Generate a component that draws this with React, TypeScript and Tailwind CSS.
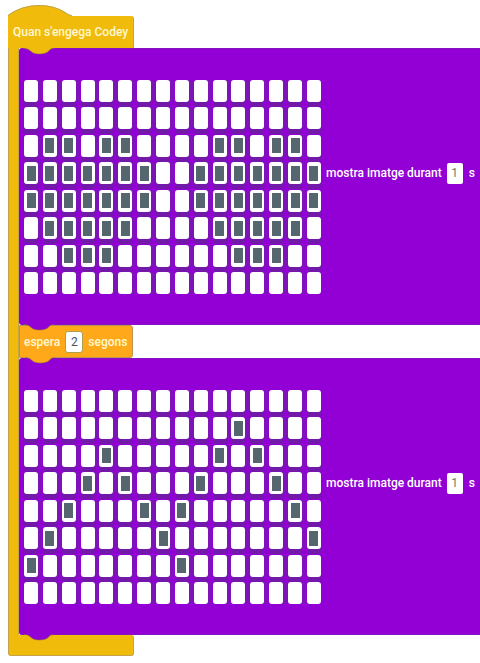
import { useState } from "react";

const FACE_EYES = [
  "................",
  "................",
  ".##.##....##.##.",
  "#######..#######",
  "#######..#######",
  ".#####....#####.",
  "..###......###..",
  "................",
];

const FACE_WAVE = [
  "................",
  "...........#....",
  "....#.....#.#...",
  "...#.#...#...#..",
  "..#...#.#.....#.",
  ".#.....#.......#",
  "#.......#.......",
  "................",
];

function Tab({ className }: { className: string }) {
  return (
    <svg
      viewBox="0 0 32 7"
      aria-hidden="true"
      className={`pointer-events-none absolute z-10 h-[7px] w-8 ${className}`}
    >
      <path d="M0 0H32C27 0 27 5 22 5.500Q17 6.500 13 5.500C9 5 8 0 0 0Z" fill="currentColor" />
      <path d="M2 .5C8 .5 9 5 13 5.500Q17 6.500 22 5.500C27 5 27 .5 32 .5" fill="none" stroke="#87713f" strokeOpacity=".6" />
    </svg>
  );
}

function LedMatrix({ rows, label }: { rows: string[]; label: string }) {
  const [cells, setCells] = useState(rows.join("").split(""));
  const toggle = (index: number) =>
    setCells(cells.map((c, i) => (i === index ? (c === "#" ? "." : "#") : c)));

  return (
    <div
      role="group"
      aria-label={label}
      className="grid h-[214px] w-[297px] shrink-0 grid-cols-[repeat(16,14px)] grid-rows-[repeat(8,22px)] content-between justify-between"
    >
      {cells.map((cell, i) => (
        <button
          key={i}
          type="button"
          aria-pressed={cell === "#"}
          aria-label={`${Math.floor(i / 16) + 1}, ${(i % 16) + 1}`}
          onClick={() => toggle(i)}
          className={`flex items-center justify-center rounded-[3px] bg-white ${
            i % 16 === 15
              ? i >= 112 ? "" : "shadow-[0_5px_0_#7319a9]"
              : i >= 112
                ? "shadow-[4px_0_0_#7d14b8]"
                : "shadow-[4px_0_0_#7d14b8,0_5px_0_#7319a9]"
          }`}
        >
          {cell === "#" && <span className="h-[15px] w-[9px] bg-[#56666f]" />}
        </button>
      ))}
    </div>
  );
}

function ImageBlock({ rows, label }: { rows: string[]; label: string }) {
  return (
    <section className="relative flex items-center rounded-l-[3px] border-y border-y-[#8414c0] bg-[#9300d6] pt-[31px] pb-[30px] pl-[5px] text-white">
      <LedMatrix rows={rows} label={label} />
      <label className="ml-[5px] flex items-center pb-7 whitespace-nowrap">
        mostra imatge durant
        <input
          defaultValue="1"
          className="mx-[5px] h-[21px] w-4 rounded-[2px] bg-white text-center font-normal text-[#66806e]"
        />
        <span className="ml-px">s</span>
      </label>
      <Tab className="top-full left-[3px] text-[#9300d6]" />
    </section>
  );
}

export default function App() {
  return (
    <main className="bg-white pt-[5px] pb-[6px] pl-2 font-['Roboto','Liberation_Sans',sans-serif] text-[12px] leading-4 font-medium">
      <svg viewBox="0 0 64 11" aria-hidden="true" className="block h-[11px] w-16">
        <path d="M0 11V10Q14 0 31 0Q47 0 58 8Q61 10 64 11Z" fill="#f1bb0c" />
        <path d="M.5 11V10Q14 .5 31 .5Q47 .5 58 8Q61 10.500 64 10.500" fill="none" stroke="#c2a44a" />
      </svg>
      <header className="relative flex h-8 w-[126px] items-center rounded-tr-[3px] border-r border-[#c2a44a] bg-[#f1bb0c] pl-[5px] whitespace-nowrap text-[#fff8cf]">
        Quan s'engega Codey
        <Tab className="top-full left-[14px] text-[#f1bb0c]" />
      </header>
      <div className="flex bg-white">
        <div className="w-[11px] shrink-0 border-x border-x-[#c2a44a] bg-[#f1bb0c]" />
        <div className="min-w-0 flex-1">
          <ImageBlock rows={FACE_EYES} label="Primera imatge" />
          <section className="relative flex h-[33px] w-[114px] items-center rounded-r-[3px] border border-[#bd9250] bg-[#ffa91a] pl-1 text-[#fff8cf]">
            <label className="flex items-center">
              espera
              <input
                defaultValue="2"
                className="mx-[5px] h-[22px] w-[18px] rounded-[3px] border border-[#a9a04f] bg-white text-center font-normal text-[#46535f]"
              />
              segons
            </label>
            <Tab className="top-full left-[3px] text-[#ffa91a]" />
          </section>
          <ImageBlock rows={FACE_WAVE} label="Segona imatge" />
        </div>
      </div>
      <footer className="h-[21px] w-[126px] rounded-r-[3px] rounded-bl-[3px] border-r border-b border-l border-[#c2a44a] bg-[#f1bb0c]" />
    </main>
  );
}
